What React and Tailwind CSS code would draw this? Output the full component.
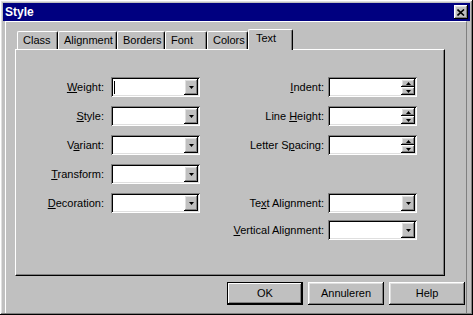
import React from "react";

const raised =
  "shadow-[inset_-1px_-1px_0_#000,inset_1px_1px_0_#fff,inset_-2px_-2px_0_#808080,inset_2px_2px_0_#dfdfdf]";
const sunken =
  "shadow-[inset_1px_1px_0_#808080,inset_-1px_-1px_0_#fff,inset_2px_2px_0_#000,inset_-2px_-2px_0_#dfdfdf]";

const tabs = [
  ["Class", 41],
  ["Alignment", 59],
  ["Borders", 48],
  ["Font", 42],
  ["Colors", 41],
];

// label with one underlined access key
const Label = ({ pre, hot, post }) => (
  <span>
    {pre}
    <span className="underline underline-offset-[1px]">{hot}</span>
    {post}
  </span>
);

const Arrow = ({ up }) => (
  <svg width="5" height="3" viewBox="0 0 5 3">
    <polygon points={up ? "2.5,0 5,3 0,3" : "0,0 5,0 2.5,3"} fill="#000" />
  </svg>
);

const Combo = ({ cursor }) => (
  <div className={`w-[89px] h-[20px] bg-white ${sunken} flex items-center p-[2px]`}>
    <div className="flex-1 h-full flex items-center pl-[1px]">
      {cursor && <div className="w-[1px] h-[13px] bg-black" />}
    </div>
    <div className={`w-[14px] h-full bg-[#c0c0c0] ${raised} flex items-center justify-center`}>
      <Arrow />
    </div>
  </div>
);

const Spin = () => (
  <div className={`w-[89px] h-[20px] bg-white ${sunken} flex p-[2px]`}>
    <div className="flex-1" />
    <div className="w-[14px] h-full flex flex-col">
      <div className={`flex-1 bg-[#c0c0c0] ${raised} flex items-center justify-center`}>
        <Arrow up />
      </div>
      <div className={`flex-1 bg-[#c0c0c0] ${raised} flex items-center justify-center`}>
        <Arrow />
      </div>
    </div>
  </div>
);

const Row = ({ label, width, gap, children, className = "" }) => (
  <div className={`h-[20px] flex items-center ${className}`}>
    <div className={`${width} text-right`}>{label}</div>
    <div className={gap}>{children}</div>
  </div>
);

const Button = ({ children, primary }) => (
  <button
    className={`w-[76px] h-[23px] bg-[#c0c0c0] flex items-center justify-center ${
      primary
        ? "border border-black shadow-[inset_-1px_-1px_0_#000,inset_1px_1px_0_#fff,inset_-2px_-2px_0_#808080]"
        : raised
    }`}
  >
    {children}
  </button>
);

export default function App() {
  return (
    <div
      className={`w-[473px] h-[315px] bg-[#c0c0c0] ${raised} flex flex-col pt-[3px] pb-[2px] font-['Liberation_Sans',Arial,sans-serif] text-[11px] text-black overflow-hidden`}
    >
      {/* Title bar */}
      <div className="mx-[3px] h-[18px] bg-[#000080] flex items-center justify-between pl-[2px]">
        <span className="text-white font-bold text-[12px] leading-none">Style</span>
        <div className={`w-[14px] h-[14px] mr-[2px] bg-[#c0c0c0] ${raised} flex items-center justify-center`}>
          <svg width="8" height="7" viewBox="0 0 8 7">
            <path d="M0.5 0.5 L7 6.5 M7 0.5 L0.5 6.5" stroke="#000" strokeWidth="1.6" />
          </svg>
        </div>
      </div>

      {/* Client area */}
      <div className="flex-1 ml-[5px] mr-[6px] border-t border-l border-white border-r border-r-[#808080] flex flex-col pl-[9px]">
        {/* Tabs */}
        <div className="h-[27px] flex items-end pl-[2px]">
          {tabs.map(([name, w]) => (
            <div
              key={name}
              style={{ width: w }}
              className="h-[18px] border-t border-l border-white border-r border-r-black shadow-[inset_-1px_0_0_#808080] rounded-tl-[2px] rounded-tr-[2px] pl-[5px] flex items-center"
            >
              {name}
            </div>
          ))}
          <div className="relative z-10 w-[45px] h-[21px] -mb-[1px] bg-[#c0c0c0] border-t border-l border-white border-r border-r-black shadow-[inset_-1px_0_0_#808080] rounded-tl-[2px] rounded-tr-[2px] pl-[7px] pb-[4px] flex items-center">
            Text
          </div>
        </div>

        {/* Tab panel */}
        <div className="w-[430px] h-[227px] border border-t-white border-l-white border-r-black border-b-black shadow-[inset_-1px_-1px_0_#808080] flex pt-[27px]">
          <div className="flex flex-col gap-[9px]">
            <Row label={<Label hot="W" post="eight:" />} width="w-[88px]" gap="ml-[7px]">
              <Combo cursor />
            </Row>
            <Row label={<Label hot="S" post="tyle:" />} width="w-[88px]" gap="ml-[7px]">
              <Combo />
            </Row>
            <Row label={<Label pre="V" hot="a" post="riant:" />} width="w-[88px]" gap="ml-[7px]">
              <Combo />
            </Row>
            <Row label={<Label hot="T" post="ransform:" />} width="w-[88px]" gap="ml-[7px]">
              <Combo />
            </Row>
            <Row label={<Label hot="D" post="ecoration:" />} width="w-[88px]" gap="ml-[7px]">
              <Combo />
            </Row>
          </div>

          <div className="ml-[30px] flex flex-col">
            <Row label={<Label hot="I" post="ndent:" />} width="w-[94px]" gap="ml-[4px]">
              <Spin />
            </Row>
            <Row label={<Label pre="Line " hot="H" post="eight:" />} width="w-[94px]" gap="ml-[4px]" className="mt-[9px]">
              <Spin />
            </Row>
            <Row label={<Label pre="Letter S" hot="p" post="acing:" />} width="w-[94px]" gap="ml-[4px]" className="mt-[9px]">
              <Spin />
            </Row>
            <Row label={<Label pre="Te" hot="x" post="t Alignment:" />} width="w-[94px]" gap="ml-[4px]" className="mt-[38px]">
              <Combo />
            </Row>
            <Row label={<Label hot="V" post="ertical Alignment:" />} width="w-[94px]" gap="ml-[4px]" className="mt-[7px]">
              <Combo />
            </Row>
          </div>
        </div>

        {/* Buttons */}
        <div className="mt-[6px] flex justify-end gap-[5px] pr-[1px]">
          <Button primary>OK</Button>
          <Button>Annuleren</Button>
          <Button>Help</Button>
        </div>
      </div>
    </div>
  );
}
